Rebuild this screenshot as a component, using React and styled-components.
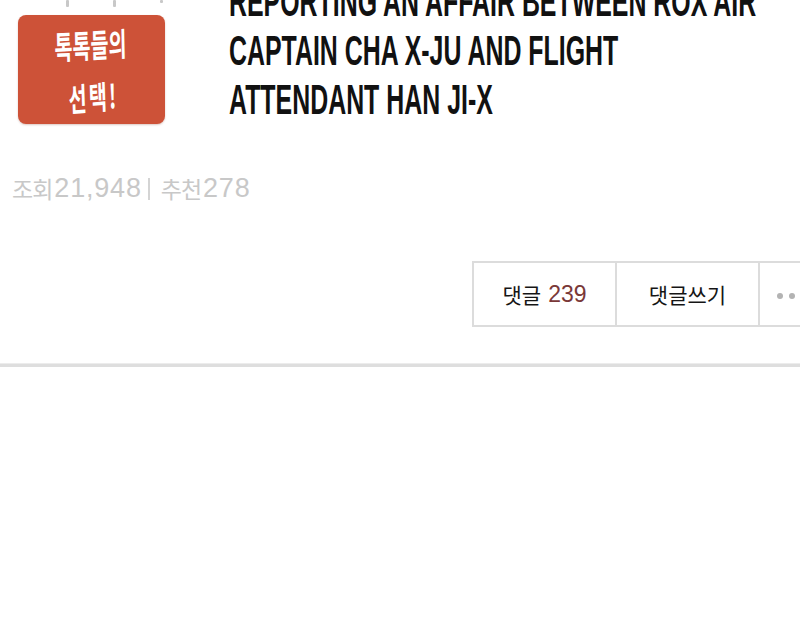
import React from "react";
import styled, { createGlobalStyle } from "styled-components";

const GlobalStyle = createGlobalStyle`
  html, body {
    margin: 0;
    padding: 0;
    background: #ffffff;
  }
  body {
    width: 800px;
    height: 632px;
    overflow: hidden;
    font-family: "Liberation Sans", "Noto Sans CJK KR", sans-serif;
  }
`;

const Page = styled.div`
  width: 800px;
  height: 632px;
  overflow: hidden;
  background: #ffffff;
`;

const Header = styled.div`
  display: flex;
  align-items: flex-start;
`;

const BadgeColumn = styled.div`
  display: flex;
  flex-direction: column;
  padding-left: 18px;
`;

const Ticks = styled.div`
  display: flex;
  align-items: flex-start;
  gap: 44px;
  height: 15px;
  padding-left: 48px;
`;

const Tick = styled.span`
  display: block;
  width: 3px;
  height: ${(p) => p.$h || 7}px;
  background: #c8c8c8;
  border-radius: 1px;
`;

const Badge = styled.div`
  width: 147px;
  height: 109px;
  box-sizing: border-box;
  border-radius: 8px;
  background: #cd5238;
  color: #fff;
  display: flex;
  flex-direction: column;
  align-items: center;
  justify-content: center;
  gap: 24px;
  font-family: "Noto Sans CJK KR", sans-serif;
  font-weight: 700;
  box-shadow: 0 1px 2px rgba(120, 40, 20, 0.25);
`;

const BadgeLine = styled.span`
  display: block;
  font-size: ${(p) => p.$size}px;
  line-height: 1;
  letter-spacing: ${(p) => p.$spacing || 0}px;
  transform: scale(0.7, 1.15) rotate(${(p) => p.$tilt || 0}deg);
  white-space: nowrap;
  margin-left: ${(p) => p.$shift || 0}px;
`;

const Title = styled.div`
  margin-left: 64px;
  margin-top: -23px;
  display: flex;
  flex-direction: column;
`;

const TitleLine = styled.span`
  display: block;
  height: 49px;
  font-family: "Liberation Sans", sans-serif;
  font-weight: 700;
  font-size: 42px;
  line-height: 49px;
  color: #111;
  white-space: nowrap;
  transform: scaleX(0.593);
  transform-origin: left center;
`;

const Stats = styled.div`
  margin-top: 49px;
  padding-left: 12px;
  height: 30px;
  display: flex;
  align-items: center;
  color: #c8c8c8;
  white-space: nowrap;
`;

const StatLabel = styled.span`
  font-family: "Noto Sans CJK KR", sans-serif;
  font-size: 23px;
  letter-spacing: -1px;
  margin-right: 2px;
`;

const StatValue = styled.span`
  font-family: "Liberation Sans", sans-serif;
  font-size: 27px;
  letter-spacing: 0.8px;
`;

const Bar = styled.span`
  display: inline-block;
  width: 2px;
  height: 22px;
  background: #d4d4d4;
  margin: 2px 11px 0 6px;
`;

const ButtonRow = styled.div`
  margin-top: 58px;
  padding-left: 472px;
  display: flex;
  white-space: nowrap;
`;

const ActionButton = styled.div`
  flex: 0 0 auto;
  width: ${(p) => p.$w}px;
  height: 66px;
  box-sizing: border-box;
  border: 2px solid #dcdcdc;
  border-left-width: ${(p) => (p.$first ? 2 : 0)}px;
  display: flex;
  align-items: center;
  justify-content: center;
  gap: 7px;
  font-family: "Noto Sans CJK KR", sans-serif;
  font-size: 21px;
  color: #151515;
  background: #fff;
`;

const Count = styled.span`
  font-family: "Liberation Sans", sans-serif;
  font-size: 23px;
  color: #7a3838;
`;

const Dot = styled.span`
  display: block;
  width: 6px;
  height: 6px;
  border-radius: 50%;
  background: #b3b3b3;
`;

const Dots = styled.div`
  display: flex;
  gap: 6px;
  align-self: center;
  margin-right: auto;
  margin-left: 17px;
  margin-top: 4px;
`;

const Divider = styled.div`
  margin-top: 36px;
  height: 3px;
  background: #dedede;
  border-top: 1px solid #ececec;
`;

export default function App() {
  return (
    <Page>
      <GlobalStyle />
      <Header>
        <BadgeColumn>
          <Ticks>
            <Tick $h={7} />
            <Tick $h={7} />
            <Tick $h={3} />
          </Ticks>
          <Badge>
            <BadgeLine $size={28} $tilt={-2} $shift={-2}>톡톡들의</BadgeLine>
            <BadgeLine $size={28} $spacing={3} $tilt={-3} $shift={4}>선택!</BadgeLine>
          </Badge>
        </BadgeColumn>
        <Title>
          <TitleLine>REPORTING AN AFFAIR BETWEEN ROX AIR</TitleLine>
          <TitleLine>CAPTAIN CHA X-JU AND FLIGHT</TitleLine>
          <TitleLine>ATTENDANT HAN JI-X</TitleLine>
        </Title>
      </Header>
      <Stats>
        <StatLabel>조회</StatLabel>
        <StatValue>21,948</StatValue>
        <Bar />
        <StatLabel>추천</StatLabel>
        <StatValue>278</StatValue>
      </Stats>
      <ButtonRow>
        <ActionButton $w={145} $first>
          <span>댓글</span>
          <Count>239</Count>
        </ActionButton>
        <ActionButton $w={143}>댓글쓰기</ActionButton>
        <ActionButton $w={142}>
          <Dots>
            <Dot />
            <Dot />
          </Dots>
        </ActionButton>
      </ButtonRow>
      <Divider />
    </Page>
  );
}
